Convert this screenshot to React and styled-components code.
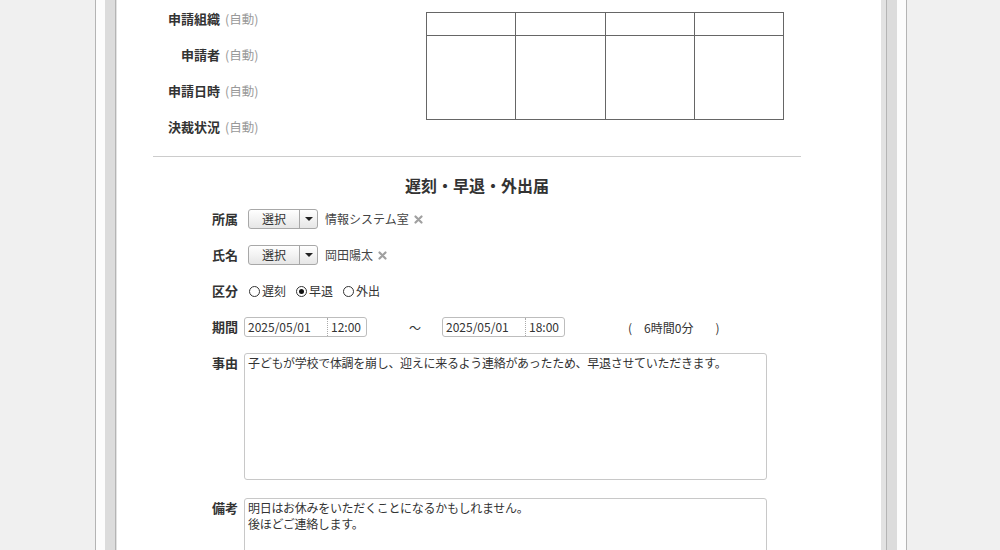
import styled, { createGlobalStyle } from "styled-components";

const GlobalStyle = createGlobalStyle`
  html, body {
    margin: 0;
    padding: 0;
    background: #f0f0f0;
    font-family: "Noto Sans CJK JP", "Noto Sans", sans-serif;
    color: #333;
  }
`;

const infoRows = ["申請組織", "申請者", "申請日時", "決裁状況"];

function CloseMark() {
    return (
        <svg width="9" height="9" viewBox="0 0 9 9">
            <path d="M1.5 1.5 L7.5 7.5 M7.5 1.5 L1.5 7.5" stroke="#a0a0a0" strokeWidth="2.2" strokeLinecap="round" />
        </svg>
    );
}

function SelectButton() {
    return (
        <SelectBox>
            <SelectMain>選択</SelectMain>
            <SelectArrow><Triangle /></SelectArrow>
        </SelectBox>
    );
}

function DateInput({ date, time }) {
    return (
        <DateBox>
            <DatePart>{date}</DatePart>
            <TimePart>{time}</TimePart>
        </DateBox>
    );
}

export default function App() {
    return (
        <>
            <GlobalStyle />
            <Frame>
                <GrayBand>
                    <Sheet>
                        <Paper>
                            <Inner>
                                <TopSection>
                                    <InfoList>
                                        {infoRows.map((label) => (
                                            <InfoRow key={label}>
                                                <InfoLabel>{label}</InfoLabel>
                                                <AutoText>(自動)</AutoText>
                                            </InfoRow>
                                        ))}
                                    </InfoList>
                                    <StampTable>
                                        <tbody>
                                            <tr>
                                                <HeadCell /><HeadCell /><HeadCell /><HeadCell />
                                            </tr>
                                            <tr>
                                                <BodyCell /><BodyCell /><BodyCell /><BodyCell />
                                            </tr>
                                        </tbody>
                                    </StampTable>
                                </TopSection>

                                <Divider />
                                <Title>遅刻・早退・外出届</Title>

                                <FormList>
                                    <FormRow>
                                        <FieldLabel>所属</FieldLabel>
                                        <Control>
                                            <SelectButton />
                                            <ValueText>情報システム室</ValueText>
                                            <CloseMark />
                                        </Control>
                                    </FormRow>
                                    <FormRow>
                                        <FieldLabel>氏名</FieldLabel>
                                        <Control>
                                            <SelectButton />
                                            <ValueText>岡田陽太</ValueText>
                                            <CloseMark />
                                        </Control>
                                    </FormRow>
                                    <FormRow>
                                        <FieldLabel>区分</FieldLabel>
                                        <RadioGroup>
                                            <RadioItem><RadioCircle /><span>遅刻</span></RadioItem>
                                            <RadioItem><RadioCircle checked /><span>早退</span></RadioItem>
                                            <RadioItem><RadioCircle /><span>外出</span></RadioItem>
                                        </RadioGroup>
                                    </FormRow>
                                    <FormRow>
                                        <FieldLabel>期間</FieldLabel>
                                        <DateRow>
                                            <DateInput date="2025/05/01" time="12:00" />
                                            <Tilde>～</Tilde>
                                            <DateInput date="2025/05/01" time="18:00" />
                                            <Duration>
                                                <span>(</span>
                                                <DurationValue>6時間0分</DurationValue>
                                                <span>)</span>
                                            </Duration>
                                        </DateRow>
                                    </FormRow>
                                    <FormRow top>
                                        <FieldLabel>事由</FieldLabel>
                                        <TextBox height="127px">子どもが学校で体調を崩し、迎えに来るよう連絡があったため、早退させていただきます。</TextBox>
                                    </FormRow>
                                    <FormRow top spaced>
                                        <FieldLabel>備考</FieldLabel>
                                        <TextBox height="127px">
                                            明日はお休みをいただくことになるかもしれません。<br />
                                            後ほどご連絡します。
                                        </TextBox>
                                    </FormRow>
                                </FormList>
                            </Inner>
                        </Paper>
                    </Sheet>
                </GrayBand>
            </Frame>
        </>
    );
}

const Frame = styled.div`
  box-sizing: border-box;
  width: 812px;
  height: 550px;
  margin-left: 95px;
  border-left: 1px solid #b4b4b4;
  border-right: 1px solid #b4b4b4;
  background: #fcfcfc;
  padding: 0 9px;
  overflow: hidden;
`;

const GrayBand = styled.div`
  height: 100%;
  background: #dcdcdc;
  padding: 0 10px;
`;

const Sheet = styled.div`
  height: 100%;
  border-left: 1px solid #b4b4b4;
  border-right: 1px solid #b4b4b4;
  background: #e2e2e2;
  padding: 0 5px 0 1px;
`;

const Paper = styled.div`
  height: 100%;
  background: #ffffff;
  overflow: hidden;
`;

const Inner = styled.div`
  width: 648px;
  margin-left: 36px;
`;

const TopSection = styled.div`
  display: flex;
  align-items: flex-start;
`;

const InfoList = styled.div`
  width: 273px;
  margin-top: 1px;
`;

const InfoRow = styled.div`
  display: grid;
  grid-template-columns: 67px auto;
  column-gap: 5px;
  align-items: center;
  height: 36px;
`;

const InfoLabel = styled.div`
  text-align: right;
  font-size: 13px;
  font-weight: bold;
  color: #333;
  line-height: 18px;
`;

const AutoText = styled.div`
  font-size: 12.5px;
  color: #999;
  line-height: 18px;
`;

const StampTable = styled.table`
  border-collapse: collapse;
  margin-top: 12px;
  width: 358px;
  table-layout: fixed;
`;

const HeadCell = styled.td`
  border: 1px solid #666;
  height: 22px;
  padding: 0;
`;

const BodyCell = styled.td`
  border: 1px solid #666;
  height: 83px;
  padding: 0;
`;

const Divider = styled.div`
  margin-top: 11px;
  border-top: 1px solid #cccccc;
`;

const Title = styled.h2`
  margin: 16px 0 12px;
  text-align: center;
  font-size: 16px;
  font-weight: bold;
  line-height: 24px;
  color: #333;
`;

const FormList = styled.div`
  display: flex;
  flex-direction: column;
  gap: 16px;
`;

const FormRow = styled.div`
  display: grid;
  grid-template-columns: 85px 1fr;
  column-gap: 6px;
  align-items: ${(props) => (props.top ? "start" : "center")};
  min-height: 20px;
  margin-top: ${(props) => (props.spaced ? "2px" : "0")};
`;

const FieldLabel = styled.div`
  text-align: right;
  font-size: 13px;
  font-weight: bold;
  color: #333;
  line-height: 20px;
`;

const Control = styled.div`
  display: flex;
  align-items: center;
  padding-left: 4px;
`;

const SelectBox = styled.div`
  box-sizing: border-box;
  display: flex;
  width: 70px;
  height: 20px;
  border: 1px solid #a8a8a8;
  border-radius: 3px;
  background: linear-gradient(#ffffff, #e6e6e6);
`;

const SelectMain = styled.div`
  flex: 1;
  text-align: center;
  font-size: 12px;
  line-height: 18px;
  color: #333;
  border-right: 1px solid #a8a8a8;
`;

const SelectArrow = styled.div`
  width: 17px;
  display: flex;
  align-items: center;
  justify-content: center;
`;

const Triangle = styled.span`
  width: 0;
  height: 0;
  border-left: 4px solid transparent;
  border-right: 4px solid transparent;
  border-top: 4px solid #222;
`;

const ValueText = styled.span`
  margin: 0 5px 0 7px;
  font-size: 12px;
  color: #444;
  line-height: 18px;
`;

const RadioGroup = styled.div`
  display: flex;
  align-items: center;
  gap: 10px;
  padding-left: 5px;
`;

const RadioItem = styled.label`
  display: flex;
  align-items: center;
  gap: 2px;
  font-size: 12px;
  color: #333;
  line-height: 18px;
`;

const RadioCircle = styled.span`
  box-sizing: border-box;
  width: 11px;
  height: 11px;
  border: 1px solid #333;
  border-radius: 50%;
  background: #fff;
  display: flex;
  align-items: center;
  justify-content: center;
  &::after {
    content: "";
    width: 5px;
    height: 5px;
    border-radius: 50%;
    background: ${(props) => (props.checked ? "#111" : "transparent")};
  }
`;

const DateRow = styled.div`
  display: flex;
  align-items: center;
`;

const DateBox = styled.div`
  box-sizing: border-box;
  display: flex;
  align-items: center;
  width: 123px;
  height: 20px;
  border: 1px solid #bdbdbd;
  border-radius: 3px;
  font-size: 12px;
  color: #333;
  line-height: 18px;
`;

const DatePart = styled.span`
  width: 79px;
  padding-left: 3px;
`;

const TimePart = styled.span`
  flex: 1;
  padding-left: 3px;
  border-left: 1px dotted #aaa;
`;

const Tilde = styled.span`
  margin: 0 21px 0 42px;
  font-size: 12px;
  color: #333;
`;

const Duration = styled.div`
  display: flex;
  margin-left: 63px;
  font-size: 12px;
  color: #333;
  span:last-child {
    margin-left: 22px;
  }
`;

const DurationValue = styled.span`
  margin-left: 12px;
`;

const TextBox = styled.div`
  box-sizing: border-box;
  width: 523px;
  height: ${(props) => props.height};
  border: 1px solid #c8c8c8;
  border-radius: 3px;
  padding: 1px 3px;
  font-size: 12px;
  letter-spacing: -0.3px;
  line-height: 16px;
  color: #333;
`;
